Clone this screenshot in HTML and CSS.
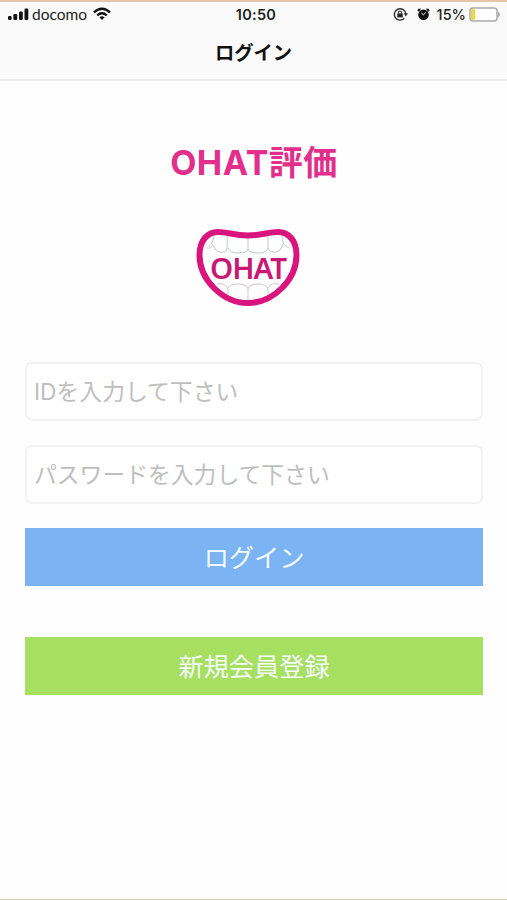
FILE: index.html
```
<!DOCTYPE html>
<html lang="ja">
<head>
	<meta charset="UTF-8">
	<meta name="viewport" content="width=device-width, initial-scale=1">
	<title>ログイン</title>
	<link rel="stylesheet" href="styles.css">
</head>
<body>
<header>
	<div class="status">
		<div class="carrier">
			<svg width="21" height="14" viewBox="0 0 21 14" fill="#111">
				<rect x="0" y="9" width="3.6" height="4" rx="1.2"/>
				<rect x="5.4" y="7" width="3.8" height="6" rx="1.2"/>
				<rect x="11" y="4.5" width="3.8" height="8.5" rx="1.2"/>
				<rect x="16.5" y="1.5" width="3.8" height="11.5" rx="1.2"/>
			</svg>
			<span class="name">docomo</span>
			<svg width="18" height="14" viewBox="0 0 18 14" fill="none" stroke="#111" stroke-width="2.3">
				<path d="M1 5.3Q9-1.9 17 5.3"/>
				<path d="M4.2 8.4Q9 4.1 13.8 8.4"/>
				<path d="M9 13L6.4 10.3Q9 8.3 11.6 10.3Z" fill="#111" stroke="none"/>
			</svg>
		</div>
		<div class="time">10:50</div>
		<div class="right">
			<!-- rotation lock -->
			<svg width="15" height="14" viewBox="0 0 15 14" fill="none" stroke="#333" stroke-width="1.4">
				<path d="M11.3 11.3A5.7 5.7 0 1 1 12.8 7"/>
				<path d="M10.6 6.3H15L12.8 9.4Z" fill="#333" stroke="none"/>
				<rect x="4.3" y="6.4" width="5.4" height="4" fill="#222" stroke="none"/>
				<path d="M5.5 6.5V5.5A1.5 1.5 0 0 1 8.5 5.5V6.5" stroke-width="1.1"/>
			</svg>
			<!-- alarm -->
			<svg class="alarm" width="13" height="14" viewBox="0 0 13 14">
				<path d="M.5 3.8Q.5 1.3 4 1.5L2 4.8ZM12.5 3.8Q12.5 1.3 9 1.5L11 4.8Z" fill="#111"/>
				<circle cx="6.5" cy="7.8" r="5.3" fill="#111"/>
				<path d="M4.4 6L6.4 7.8L8.8 5.5" stroke="#fff" fill="none"/>
			</svg>
			<span class="percent">15%</span>
			<svg width="32" height="15" viewBox="0 0 32 15">
				<rect x="1" y="1" width="27" height="13" rx="3" fill="#fff" stroke="#aaa" stroke-width="1.5"/>
				<rect x="2" y="2.2" width="4.2" height="10.6" rx="1" fill="#e8d94a"/>
				<path d="M29.2 4.5Q32.5 7.5 29.2 10.5Z" fill="#999"/>
			</svg>
		</div>
	</div>
	<div class="navTitle">ログイン</div>
</header>
<main>
	<h1>OHAT評価</h1>
	<svg class="logo" width="104" height="80" viewBox="0 0 104 80" fill="none">
		<g stroke="#c3cbc9" stroke-width="1">
			<path d="M13 18Q17 16 18 7M11 20Q15 21 17 17Q20 26 29 24Q32 23 31 8M32 20Q34 25 42 25Q52 25 52 21V8M52 21Q53 25 62 25Q71 25 72 20V8M72 20Q74 25 81 24Q86 22 87 16M86 7Q86 18 93 20"/>
			<path d="M21 56Q28 54 32 61V68M32 60Q34 56 42 56Q51 56 52 61V74M52 61Q53 56 62 56Q70 56 72 61V68M72 60Q75 54 83 56" stroke="#d3c5cf"/>
		</g>
		<path d="M22 4C32 4 38 7.5 52 7.5S72 4 82 4C93 4 100.5 13 100.5 27C100.5 40 94 52 86 60C76 70 66 75 52 75S28 70 18 60C10 52 3.5 40 3.5 27C3.5 13 11 4 22 4Z" stroke="#d9147c" stroke-width="6"/>
		<text x="52.5" y="51" text-anchor="middle" textLength="77" lengthAdjust="spacing">OHAT</text>
	</svg>
	<form>
		<input type="text" placeholder="IDを入力して下さい">
		<input type="password" placeholder="パスワードを入力して下さい">
		<button type="button" class="login">ログイン</button>
		<button type="button" class="signup">新規会員登録</button>
	</form>
</main>
</body>
</html>
```

FILE: styles.css
```
*{
	box-sizing: border-box;
}

body{
	margin: 0;
	height: 900px;
	background-color: #fefefe;
	border-top: 2px solid #e5c5a8;
	border-bottom: 1px solid #d5d2b4;
	font-family: Inter, "Noto Sans CJK JP", sans-serif;
}

header{
	height: 79px;
	background-color: #fafafa;
	border-bottom: 2px solid #ececec;
}

.status{
	display: grid;
	grid-template-columns: 1fr auto 1fr;
	align-items: center;
	height: 24px;
	padding: 0 6px 0 8px;
	color: #222;
}

.carrier, .right{
	display: flex;
	align-items: center;
}

.right{
	justify-content: flex-end;
}

.name{
	margin: 0 6px 0 3px;
	font-family: Lato, sans-serif;
	font-size: 15.5px;
}

.time{
	padding-left: 3px;
	font-size: 14.5px;
	font-weight: 600;
	letter-spacing: 0.3px;
}

.alarm{
	margin: 0 7px 0 9px;
}

.percent{
	margin-right: 3px;
	font-size: 14.5px;
	font-weight: 500;
}

.navTitle{
	line-height: 54px;
	text-align: center;
	font-size: 19.3px;
	font-weight: bold;
	color: #111;
}

main{
	display: flex;
	flex-direction: column;
	align-items: center;
	padding: 0 24px 0 25px;
}

h1{
	margin: 57px 0 0;
	line-height: 50px;
	font-size: 34px;
	font-weight: bold;
	letter-spacing: 0.5px;
	color: #e22f8b;
}

.logo{
	margin-top: 40px;
	margin-right: 12px;
}

.logo text{
	font-family: "Noto Sans", sans-serif;
	font-size: 29.5px;
	font-weight: 600;
	fill: #c91873;
}

form{
	display: flex;
	flex-direction: column;
	width: 100%;
	margin-top: 54px;
}

input{
	height: 59px;
	margin: 0 0 24px;
	padding: 0 7px;
	border: 2px solid #f2f2f2;
	border-radius: 7px;
	background-color: white;
	font-family: inherit;
	font-size: 22.8px;
}

input::placeholder{
	color: #bebebe;
	opacity: 1;
}

button{
	height: 58px;
	border: none;
	padding: 0 0 2px;
	font-family: inherit;
	font-size: 25.2px;
	color: #f4fcff;
}

.login{
	margin-bottom: 51px;
	background-color: #7cb3f2;
}

.signup{
	background-color: #a7df60;
}
```
